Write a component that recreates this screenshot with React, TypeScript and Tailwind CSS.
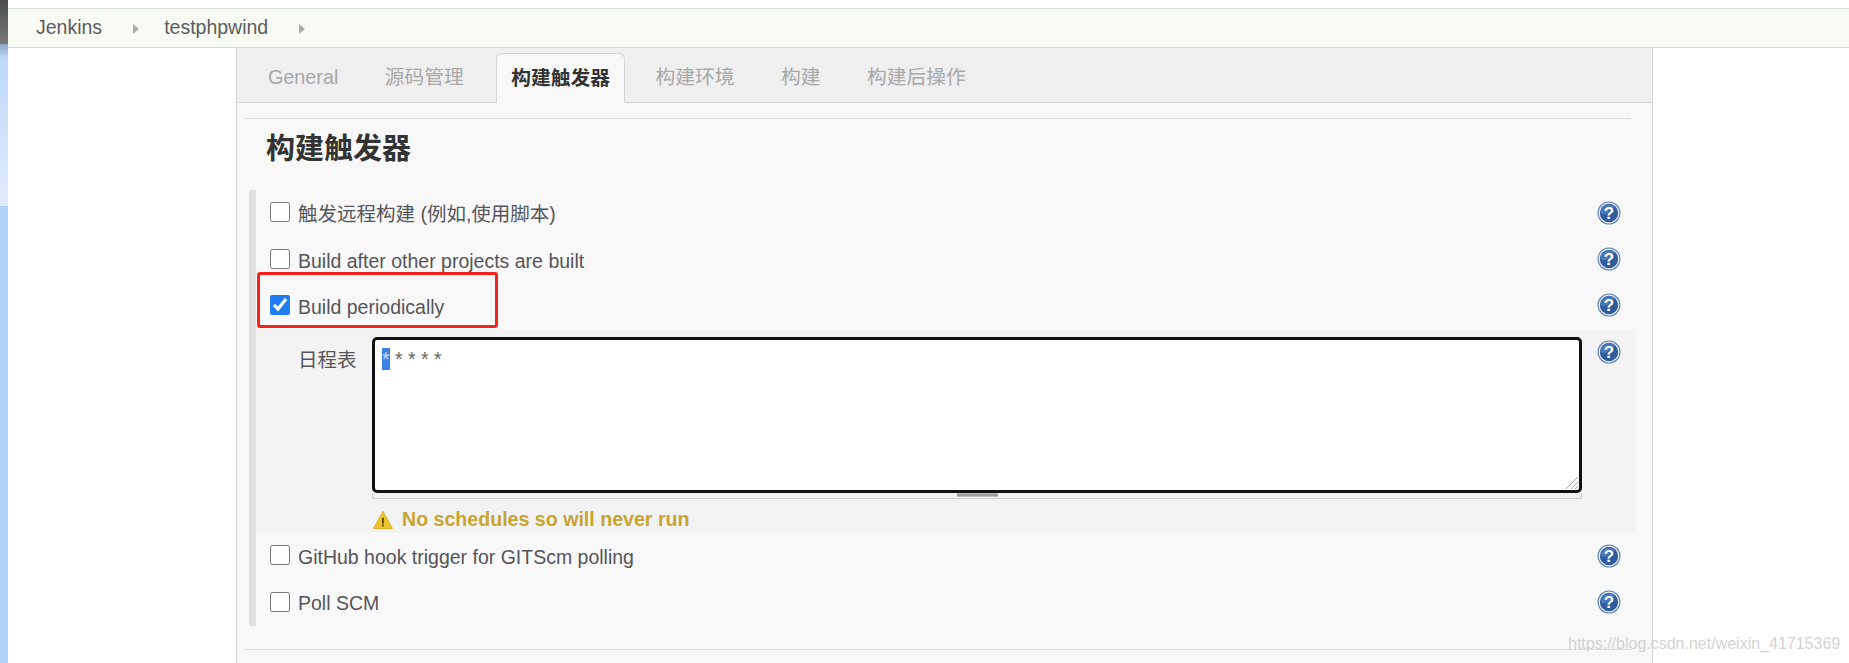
const FONT = { fontFamily: '"Liberation Sans", "Noto Sans CJK SC", sans-serif' };

function HelpIcon() {
  return (
    <svg width="24" height="24" viewBox="0 0 24 24" className="shrink-0">
      <circle cx="12" cy="12" r="11.5" fill="#5f82b5" />
      <circle cx="12" cy="12" r="10.4" fill="#f2f5fa" />
      <circle cx="12" cy="12" r="9.2" fill="#2f5c9c" />
      <path d="M3.5 12a8.5 8.5 0 0 1 15-5.5c-3 .5-4.5 2-7 4.5s-5 3-8 1z" fill="#4a78b5" />
      <text x="12" y="18" textAnchor="middle" fontSize="17" fontWeight="700" fill="#ffffff" fontFamily="Liberation Sans, sans-serif">?</text>
    </svg>
  );
}

function Arrow() {
  return (
    <svg width="6" height="10" viewBox="0 0 6 10" className="shrink-0 mt-[2px]">
      <path d="M0 0l6 5-6 5z" fill="#a9ada6" />
    </svg>
  );
}

function WarningIcon() {
  return (
    <svg width="20" height="20" viewBox="0 0 22 21" className="shrink-0 mt-[2px]">
      <path d="M11 1L21.5 20H.5z" fill="#ecc52c" stroke="#d9ad1f" strokeLinejoin="round" />
      <rect x="10" y="8" width="2" height="6.5" fill="#5a4708" />
      <rect x="10" y="15.5" width="2" height="2" fill="#5a4708" />
    </svg>
  );
}

function TriggerRow({ label, checked, low }: { label: string; checked?: boolean; low?: boolean }) {
  return (
    <div className="flex items-center h-[46.4px] pl-[14px] pr-[15px]">
      <input type="checkbox" defaultChecked={checked} className="w-5 h-5 m-0 -mt-[2px] shrink-0 accent-[#1f7cf2]" />
      <span className={low ? "ml-2 mt-[4px] text-[19.5px] text-[#55555a]" : "ml-2 mt-[2px] text-[19.5px] text-[#55555a]"}>{label}</span>
      <div className="ml-auto -mt-[1px]">
        <HelpIcon />
      </div>
    </div>
  );
}

const tabs = ["General", "源码管理", "构建触发器", "构建环境", "构建", "构建后操作"];

export default function App() {
  return (
    <div className="flex h-[663px] overflow-hidden bg-white relative" style={FONT}>
      {/* strip of the window behind */}
      <div className="w-2 shrink-0 flex flex-col">
        <div className="h-[44px] bg-gradient-to-b from-[#4d4d4f] to-[#77797c]" />
        <div className="h-[14px] bg-gradient-to-b from-[#8fa9c4] to-[#bbd8f9]" />
        <div className="h-[148px] bg-gradient-to-b from-[#bbd8f9] to-[#e1ecfd]" />
        <div className="flex-1 bg-[#aed1fa]" />
      </div>

      <div className="flex-1 min-w-0 flex flex-col">
        <div className="h-[9px] bg-white border-b border-[#dedede]" />
        <div className="h-[39px] shrink-0 bg-[#f8faf4] border-b border-[#d8d8d8] flex items-center pl-[28px] text-[19.5px] text-[#5c5c5c]">
          <span>Jenkins</span>
          <div className="ml-[31px]"><Arrow /></div>
          <span className="ml-[25px]">testphpwind</span>
          <div className="ml-[31px]"><Arrow /></div>
        </div>

        <div className="ml-[228px] w-[1417px] flex-1 bg-[#f8f8f9] border-x border-[#d4d4d4]">
          <div className="h-[55px] bg-[#efefef] border-b border-[#d4d4d4] flex items-end pl-[15px] gap-[14.5px] text-[19.75px]">
            {tabs.map((t, i) =>
              i === 2 ? (
                <div key={t} className="h-[50px] -mb-px ml-[2px] px-[14px] flex items-center bg-[#f8f8f9] border border-b-0 border-[#d4d4d4] rounded-t-[6px] font-bold text-[#333] text-[19.75px]">
                  {t}
                </div>
              ) : (
                <div key={t} className="h-[49px] px-4 flex items-center text-[#a8a8a8]">
                  {t}
                </div>
              )
            )}
          </div>

          <div className="ml-[7px] mr-[21px] mt-[15px] border-t border-[#dcdcdc] pt-2 h-[532px] flex flex-col border-b">
            <h1 className="ml-[22px] text-[29px] leading-[44px] font-bold text-[#333]">构建触发器</h1>

            <div className="ml-[5px] mt-[19px] w-[1387px] border-l-[7px] border-[#e0e0e0]">
              <TriggerRow label="触发远程构建 (例如,使用脚本)" />
              <TriggerRow label="Build after other projects are built" low />
              <TriggerRow label="Build periodically" checked low />

              <div className="h-[204px] bg-[#f3f3f3] flex pr-[15px] pt-2">
                <span className="ml-[42px] mt-[11px] w-[74px] shrink-0 text-[19.5px] leading-6 text-[#55555a]">日程表</span>
                <div className="w-[1210px] shrink-0 flex flex-col">
                  <div className="h-[156px] bg-white border-[3px] border-[#111] rounded-[5px] pl-[7px] pt-[8px] text-[19.5px] leading-[23px] text-[#666] relative">
                    <span className="bg-[#3b82e6] text-[#cfe0fa]">*</span>
                    <span> * * * *</span>
                    <svg width="14" height="14" viewBox="0 0 14 14" className="absolute right-0 bottom-0">
                      <path d="M1 13L13 1M6 13l7-7M10 13l3-3" stroke="#a8a8a8" strokeWidth="1" />
                    </svg>
                  </div>
                  <div className="h-[6px] bg-[#f1f1f1] border-b border-x border-[#cfcfcf] flex justify-center">
                    <div className="w-[41px] h-[4px] bg-[#9c9c9c] border-y border-[#bdbdbd]" />
                  </div>
                  <div className="mt-[9px] flex items-center pl-px">
                    <WarningIcon />
                    <span className="ml-[9px] text-[19.6px] leading-[20px] font-bold text-[#c8a432]">No schedules so will never run</span>
                  </div>
                </div>
                <div className="ml-auto mt-[3px]">
                  <HelpIcon />
                </div>
              </div>

              <TriggerRow label="GitHub hook trigger for GITScm polling" />
              <TriggerRow label="Poll SCM" />
            </div>
          </div>
        </div>
      </div>

      {/* hand-drawn annotation */}
      <div className="absolute left-[257px] top-[272px] w-[241px] h-[56px] border-[3px] border-[#f5221b] rounded-[3px]" />
      {/* image watermark */}
      <div className="absolute left-[1568px] top-[633px] text-[16px] leading-[22px] text-[#c9c9c9] opacity-80">
        https://blog.csdn.net/weixin_41715369
      </div>
    </div>
  );
}
